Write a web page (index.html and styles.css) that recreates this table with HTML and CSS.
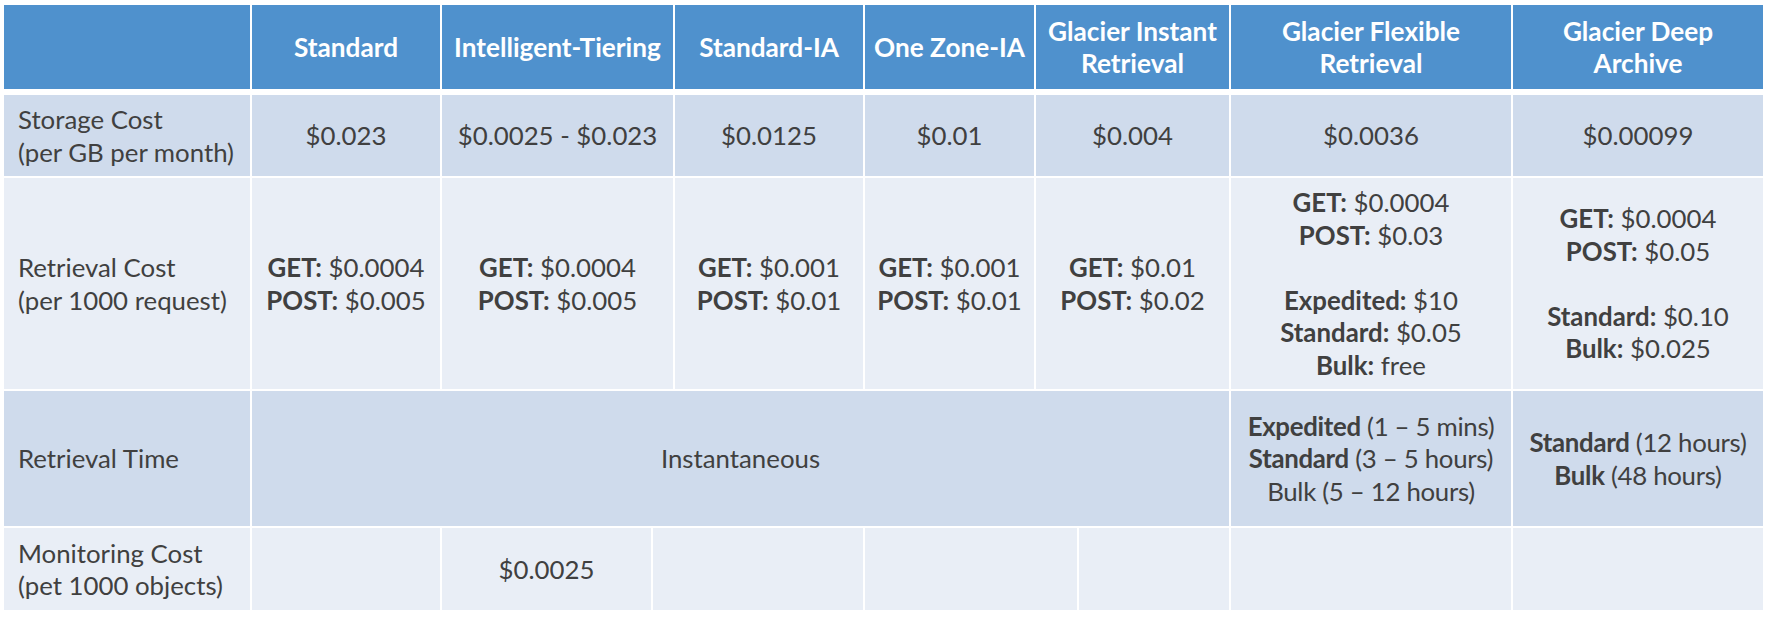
FILE: index.html
```html
<!DOCTYPE html>
<html>
<head>
<meta charset="utf-8">
<link rel="stylesheet" href="styles.css">
</head>
<body>
<div class="table">
  <div class="row cols8 head">
    <div class="cell"></div>
    <div class="cell"><span>Standard</span></div>
    <div class="cell"><span>Intelligent-Tiering</span></div>
    <div class="cell"><span>Standard-IA</span></div>
    <div class="cell"><span>One Zone-IA</span></div>
    <div class="cell"><span>Glacier Instant<br>Retrieval</span></div>
    <div class="cell"><span>Glacier Flexible<br>Retrieval</span></div>
    <div class="cell"><span>Glacier Deep<br>Archive</span></div>
  </div>
  <div class="row cols8 dark r-storage">
    <div class="cell label"><span>Storage Cost<br>(per GB per month)</span></div>
    <div class="cell"><span>$0.023</span></div>
    <div class="cell"><span>$0.0025 - $0.023</span></div>
    <div class="cell"><span>$0.0125</span></div>
    <div class="cell"><span>$0.01</span></div>
    <div class="cell"><span>$0.004</span></div>
    <div class="cell"><span>$0.0036</span></div>
    <div class="cell"><span>$0.00099</span></div>
  </div>
  <div class="row cols8 light r-cost">
    <div class="cell label"><span>Retrieval Cost<br>(per 1000 request)</span></div>
    <div class="cell"><span><b>GET:</b> $0.0004<br><b>POST:</b> $0.005</span></div>
    <div class="cell"><span><b>GET:</b> $0.0004<br><b>POST:</b> $0.005</span></div>
    <div class="cell"><span><b>GET:</b> $0.001<br><b>POST:</b> $0.01</span></div>
    <div class="cell"><span><b>GET:</b> $0.001<br><b>POST:</b> $0.01</span></div>
    <div class="cell"><span><b>GET:</b> $0.01<br><b>POST:</b> $0.02</span></div>
    <div class="cell"><span><b>GET:</b> $0.0004<br><b>POST:</b> $0.03<br><br><b>Expedited:</b> $10<br><b>Standard:</b> $0.05<br><b>Bulk:</b> free</span></div>
    <div class="cell"><span><b>GET:</b> $0.0004<br><b>POST:</b> $0.05<br><br><b>Standard:</b> $0.10<br><b>Bulk:</b> $0.025</span></div>
  </div>
  <div class="row cols-time dark r-time">
    <div class="cell label"><span>Retrieval Time</span></div>
    <div class="cell"><span>Instantaneous</span></div>
    <div class="cell"><span class="narrow"><b>Expedited</b> (1 – 5 mins)<br><b>Standard</b> (3 – 5 hours)<br>Bulk (5 – 12 hours)</span></div>
    <div class="cell"><span class="narrow"><b>Standard</b> (12 hours)<br><b>Bulk</b> (48 hours)</span></div>
  </div>
  <div class="row cols-mon light r-mon">
    <div class="cell label"><span>Monitoring Cost<br>(pet 1000 objects)</span></div>
    <div class="cell"></div>
    <div class="cell"><span>$0.0025</span></div>
    <div class="cell"></div>
    <div class="cell"></div>
    <div class="cell"></div>
    <div class="cell"></div>
    <div class="cell"></div>
  </div>
</div>
</body>
</html>
```
FILE: styles.css
```css
html, body {
  margin: 0;
  padding: 0;
  background: #ffffff;
}

body {
  font-family: "Lato", "Open Sans", sans-serif;
  font-size: 25.8px;
  line-height: 32.5px;
  color: #404040;
}

.table {
  display: flex;
  flex-direction: column;
  gap: 2px;
  padding: 5px 5px 0 4px;
  width: 1759px;
}

.row {
  display: grid;
  column-gap: 2px;
}

.cols8 {
  grid-template-columns: 246px 188px 231px 188px 169px 193px 280px 250px;
}

.cols-time {
  grid-template-columns: 246px 977px 280px 250px;
}

.cols-mon {
  grid-template-columns: 246px 188px 209px 210px 212px 150px 280px 250px;
}

.cell {
  display: flex;
  align-items: center;
  justify-content: center;
  text-align: center;
  white-space: nowrap;
}

.cell b {
  font-weight: 700;
}

.cell .narrow {
  letter-spacing: -0.3px;
}

.cell.label {
  justify-content: flex-start;
  text-align: left;
  padding-left: 14px;
}

.head {
  height: 84px;
  margin-bottom: 4px;
}

.head .cell {
  background: #4f91cd;
  color: #ffffff;
  font-weight: 700;
  font-size: 26.2px;
}

.dark .cell {
  background: #cfdbec;
}

.light .cell {
  background: #e9eef6;
}

.r-storage { height: 81px; }
.r-cost { height: 211px; }
.r-time { height: 135px; }
.r-mon { height: 82px; }
```
